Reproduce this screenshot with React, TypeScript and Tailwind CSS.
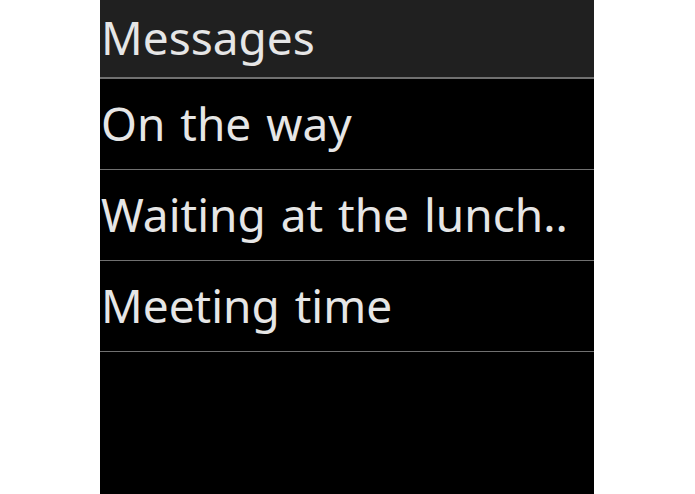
const items = ['On the way', 'Waiting at the lunch..', 'Meeting time']

export default function App() {
  return (
    <div className="flex min-h-[494px] w-full bg-white pl-[100px]">
      <div
        className="flex h-[494px] w-[494px] flex-col bg-black text-[#e6e6e6] [word-spacing:3px]"
        style={{ fontFamily: '"Noto Sans", "Open Sans", sans-serif' }}
      >
        <div className="flex h-[79px] shrink-0 items-center border-b-2 border-[#707070] bg-[#202020] pb-[3px] text-[46px] leading-none">
          <span className="pl-px">Messages</span>
        </div>
        {items.map((item) => (
          <div
            key={item}
            className="flex h-[91px] shrink-0 items-center overflow-hidden whitespace-nowrap border-b border-[#707070] pb-[3px] text-[46px] leading-none"
          >
            <span className="pl-px">{item}</span>
          </div>
        ))}
      </div>
    </div>
  )
}
